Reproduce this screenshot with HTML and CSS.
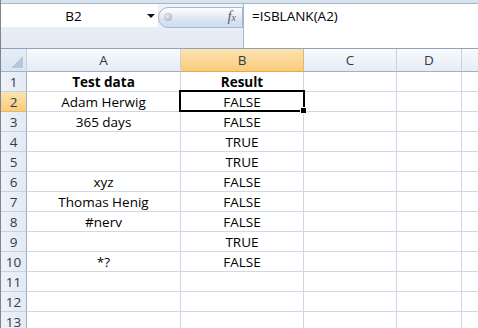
FILE: index.html
```html
<!DOCTYPE html>
<html>
<head>
<meta charset="utf-8">
<link rel="stylesheet" href="styles.css">
</head>
<body>
<div class="app">
  <div class="topstrip"></div>
  <div class="fbar">
    <div class="left">
      <div class="namebox">
        <span class="name">B2</span>
        <span class="arrow"></span>
      </div>
      <div class="pill"><span class="knob"></span><span class="fx">f<sub>x</sub></span></div>
    </div>
    <div class="formula">=ISBLANK(A2)</div>
  </div>
  <div class="sheet">
    <div class="corner"><span class="tri"></span></div>
    <div class="ch">A</div>
    <div class="ch sel">B</div>
    <div class="ch">C</div>
    <div class="ch">D</div>
    <div class="ch last"></div>

    <div class="rh">1</div><div class="c b">Test data</div><div class="c b">Result</div><div class="c"></div><div class="c"></div><div class="c last"></div>
    <div class="rh sel">2</div><div class="c">Adam Herwig</div><div class="c active">FALSE<span class="outline"><span class="handle"></span></span></div><div class="c"></div><div class="c"></div><div class="c last"></div>
    <div class="rh">3</div><div class="c">365 days</div><div class="c">FALSE</div><div class="c"></div><div class="c"></div><div class="c last"></div>
    <div class="rh">4</div><div class="c"></div><div class="c">TRUE</div><div class="c"></div><div class="c"></div><div class="c last"></div>
    <div class="rh">5</div><div class="c"></div><div class="c">TRUE</div><div class="c"></div><div class="c"></div><div class="c last"></div>
    <div class="rh">6</div><div class="c">xyz</div><div class="c">FALSE</div><div class="c"></div><div class="c"></div><div class="c last"></div>
    <div class="rh">7</div><div class="c">Thomas Henig</div><div class="c">FALSE</div><div class="c"></div><div class="c"></div><div class="c last"></div>
    <div class="rh">8</div><div class="c">#nerv</div><div class="c">FALSE</div><div class="c"></div><div class="c"></div><div class="c last"></div>
    <div class="rh">9</div><div class="c"></div><div class="c">TRUE</div><div class="c"></div><div class="c"></div><div class="c last"></div>
    <div class="rh">10</div><div class="c">*?</div><div class="c">FALSE</div><div class="c"></div><div class="c"></div><div class="c last"></div>
    <div class="rh">11</div><div class="c"></div><div class="c"></div><div class="c"></div><div class="c"></div><div class="c last"></div>
    <div class="rh">12</div><div class="c"></div><div class="c"></div><div class="c"></div><div class="c"></div><div class="c last"></div>
    <div class="rh">13</div><div class="c"></div><div class="c"></div><div class="c"></div><div class="c"></div><div class="c last"></div>
  </div>
</div>
</body>
</html>
```
FILE: styles.css
```css
html, body {
  margin: 0;
  padding: 0;
  background: #ffffff;
  overflow: hidden;
}
body {
  width: 478px;
  height: 328px;
  font-family: "Open Sans", "Liberation Sans", sans-serif;
  font-size: 13.5px;
  color: #000;
}
.app {
  border-left: 1px solid #7a8696;
  height: 328px;
  box-sizing: border-box;
}
.topstrip {
  height: 3px;
  background: #d9e3ef;
  border-bottom: 1px solid #a9b6c6;
}
.fbar {
  display: flex;
  height: 44px;
  background: linear-gradient(#eef3f9, #e3eaf3);
  border-bottom: 1px solid #8ea3bd;
}
.left {
  display: flex;
  align-items: flex-start;
  width: 242px;
}
.namebox {
  position: relative;
  width: 157px;
  height: 23px;
  background: #fff;
  display: flex;
  align-items: center;
  justify-content: center;
}
.name {
  margin-left: -12px;
  font-size: 13.5px;
}
.arrow {
  position: absolute;
  left: 146px;
  top: 10px;
  width: 0;
  height: 0;
  border-left: 4px solid transparent;
  border-right: 4px solid transparent;
  border-top: 4px solid #111;
}
.pill {
  position: relative;
  flex: 1;
  height: 20px;
  margin-top: 3px;
  background: linear-gradient(#fdfeff, #dbe5f2 60%, #cfdcee);
  border: 1px solid #a5b7cf;
  border-left: none;
  border-radius: 10px 0 0 10px;
  box-sizing: border-box;
  height: 21px;
  border-left: 1px solid #a5b7cf;
}
.knob {
  position: absolute;
  left: 5px;
  top: 5px;
  width: 8px;
  height: 8px;
  border-radius: 50%;
  background: radial-gradient(circle at 40% 40%, #e8ecf2, #9aa5b3);
}
.fx {
  position: absolute;
  right: 6px;
  top: 0px;
  font-family: "Liberation Serif", serif;
  font-style: italic;
  font-size: 15px;
  color: #5a6472;
}
.fx sub {
  font-size: 10px;
  vertical-align: 0;
}
.formula {
  flex: 1;
  background: #fff;
  border-left: 1px solid #a5b7cf;
  padding: 2px 0 0 8px;
  line-height: 20px;
}
.sheet {
  display: grid;
  grid-template-columns: 26px 154px 123px 93px 65px 1fr;
  grid-template-rows: 23px repeat(13, 20px);
}
.corner, .ch {
  background: linear-gradient(#f8fafc, #e6ecf4);
  border-right: 1px solid #c5d2e2;
  border-bottom: 1px solid #9eb1c8;
  box-sizing: border-box;
  display: flex;
  align-items: center;
  justify-content: center;
  color: #2d3b4d;
}
.corner {
  position: relative;
  background: linear-gradient(#e9eef5, #dbe3ee);
}
.tri {
  position: absolute;
  right: 3px;
  bottom: 3px;
  width: 0;
  height: 0;
  border-left: 12px solid transparent;
  border-bottom: 12px solid #b7c6d8;
}
.ch.sel {
  background: linear-gradient(#fbe3b2, #f9cc7b);
  border-bottom-color: #e2a94d;
  border-right-color: #e2b86e;
}
.ch.last {
  border-right: none;
}
.rh {
  background: linear-gradient(90deg, #eef2f8, #e4eaf3);
  border-right: 1px solid #9eb1c8;
  border-bottom: 1px solid #c5d2e2;
  box-sizing: border-box;
  display: flex;
  align-items: center;
  justify-content: center;
  color: #2d3b4d;
}
.rh.sel {
  background: linear-gradient(#fbe3b2, #f9cc7b);
  border-bottom-color: #e2b86e;
}
.c {
  border-right: 1px solid #d0d7e5;
  border-bottom: 1px solid #d0d7e5;
  box-sizing: border-box;
  display: flex;
  align-items: center;
  justify-content: center;
  white-space: nowrap;
}
.c.last {
  border-right: none;
}
.b {
  font-weight: bold;
}
.active {
  position: relative;
}
.outline {
  position: absolute;
  left: -2px;
  top: -2px;
  right: -2px;
  bottom: -1px;
  border: 2px solid #000;
  box-sizing: border-box;
}
.handle {
  position: absolute;
  right: -4px;
  bottom: -4px;
  width: 5px;
  height: 5px;
  background: #000;
  border: 1px solid #fff;
}
```
